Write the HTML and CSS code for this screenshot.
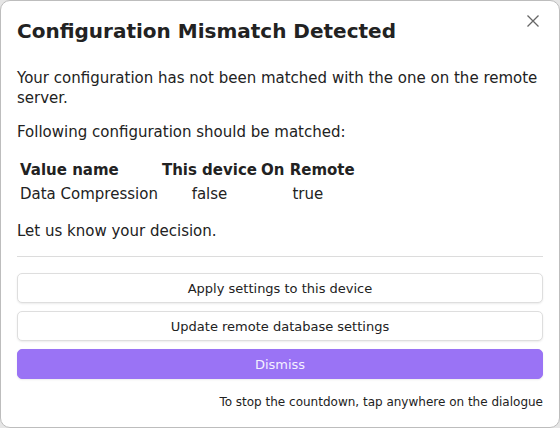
FILE: index.html
```html
<!DOCTYPE html>
<html>
<head>
<meta charset="utf-8">
<link rel="stylesheet" href="styles.css">
</head>
<body>
<div class="modal">
  <button class="close" aria-label="Close">
    <svg width="14" height="14" viewBox="0 0 14 14"><path d="M1.5 1.5L12.5 12.5M12.5 1.5L1.5 12.5" stroke="#666" stroke-width="1.3" fill="none"/></svg>
  </button>
  <h1 class="title">Configuration Mismatch Detected</h1>
  <p class="text first">Your configuration has not been matched with the one on the remote server.</p>
  <p class="text">Following configuration should be matched:</p>
  <table class="diff">
    <tr><th>Value name</th><th>This device</th><th>On Remote</th></tr>
    <tr><td>Data Compression</td><td class="c">false</td><td class="c">true</td></tr>
  </table>
  <p class="text">Let us know your decision.</p>
  <hr class="sep">
  <div class="actions">
    <button class="btn">Apply settings to this device</button>
    <button class="btn">Update remote database settings</button>
    <button class="btn cta">Dismiss</button>
  </div>
  <div class="note">To stop the countdown, tap anywhere on the dialogue</div>
</div>
</body>
</html>
```
FILE: styles.css
```css
html, body {
  margin: 0;
  padding: 0;
  background: #e6e6e6;
}
body {
  font-family: "DejaVu Sans", sans-serif;
  color: #222;
}
.modal {
  position: relative;
  box-sizing: border-box;
  width: 560px;
  height: 428px;
  background: #fff;
  border: 1px solid #bdbdbd;
  border-radius: 10px;
  padding: 17px 16px 0 16px;
}
.close {
  position: absolute;
  top: 12px;
  right: 18px;
  width: 16px;
  height: 16px;
  padding: 0;
  border: 0;
  background: none;
  display: flex;
  align-items: center;
  justify-content: center;
}
.title {
  margin: 0;
  font-size: 20px;
  font-weight: bold;
  line-height: 26px;
}
.text {
  margin: 0;
  font-size: 15px;
  line-height: 20px;
}
.text.first {
  margin-top: 24px;
}
.text + .text, .diff + .text {
  margin-top: 14px;
}
.diff {
  margin-top: 15px;
  font-size: 15px;
  border-spacing: 2px;
}
.diff th {
  text-align: left;
  font-weight: bold;
  padding: 1px;
  line-height: 20px;
}
.diff td {
  padding: 1px;
  line-height: 20px;
}
.diff td.c {
  text-align: center;
}
.sep {
  border: 0;
  border-top: 1px solid #dcdcdc;
  margin: 15px 0 16px 0;
}
.actions {
  display: flex;
  flex-direction: column;
  gap: 8px;
}
.btn {
  font-family: "DejaVu Sans", sans-serif;
  font-size: 13px;
  color: #222;
  height: 30px;
  background: #fff;
  border: 1px solid #dedede;
  border-radius: 5px;
  box-shadow: 0 1px 2px rgba(0,0,0,0.08);
}
.btn.cta {
  background: #9a73f5;
  border-color: #9a73f5;
  color: #f4f0ff;
}
.note {
  margin-top: 16px;
  text-align: right;
  font-size: 12px;
  color: #222;
}
```
